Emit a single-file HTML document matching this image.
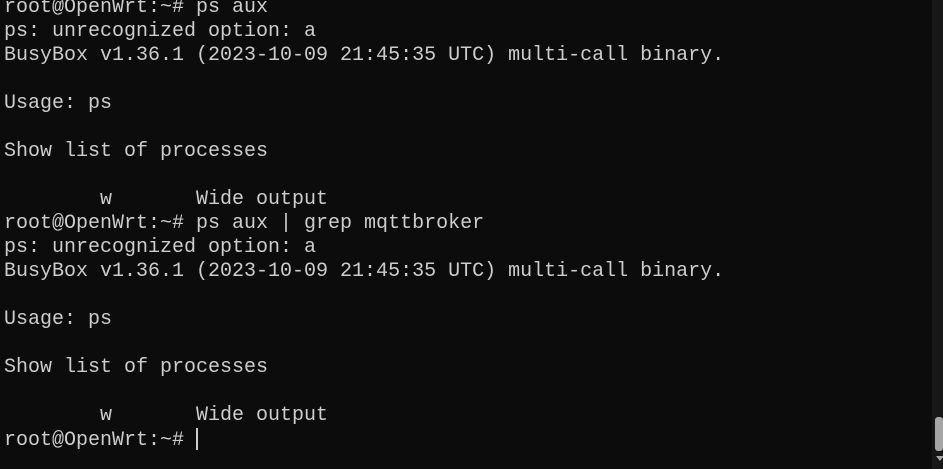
<!DOCTYPE html>
<html><head><style>
html,body{margin:0;padding:0;width:943px;height:469px;overflow:hidden;background:#0c0c0c;}
pre{position:absolute;left:4px;top:-4px;margin:0;font-family:"Liberation Mono",monospace;font-size:20px;line-height:24px;color:#cccccc;}
.cur{display:inline-block;width:2px;height:22px;background:#cccccc;vertical-align:-5px;}
.sb{position:absolute;left:932px;top:0;width:11px;height:469px;background:#171717;}
.th{position:absolute;left:935px;top:417px;width:8px;height:34px;background:#a5a5a5;border-radius:3px;}
.ar{position:absolute;left:936px;top:456px;width:0;height:0;border-left:4px solid transparent;border-right:4px solid transparent;border-top:5px solid #a5a5a5;}
</style></head><body>
<pre>root@OpenWrt:~# ps aux
ps: unrecognized option: a
BusyBox v1.36.1 (2023-10-09 21:45:35 UTC) multi-call binary.

Usage: ps

Show list of processes

        w       Wide output
root@OpenWrt:~# ps aux | grep mqttbroker
ps: unrecognized option: a
BusyBox v1.36.1 (2023-10-09 21:45:35 UTC) multi-call binary.

Usage: ps

Show list of processes

        w       Wide output
root@OpenWrt:~# <span class="cur"></span></pre>
<div class="sb"></div><div class="th"></div><div class="ar"></div>
</body></html>
